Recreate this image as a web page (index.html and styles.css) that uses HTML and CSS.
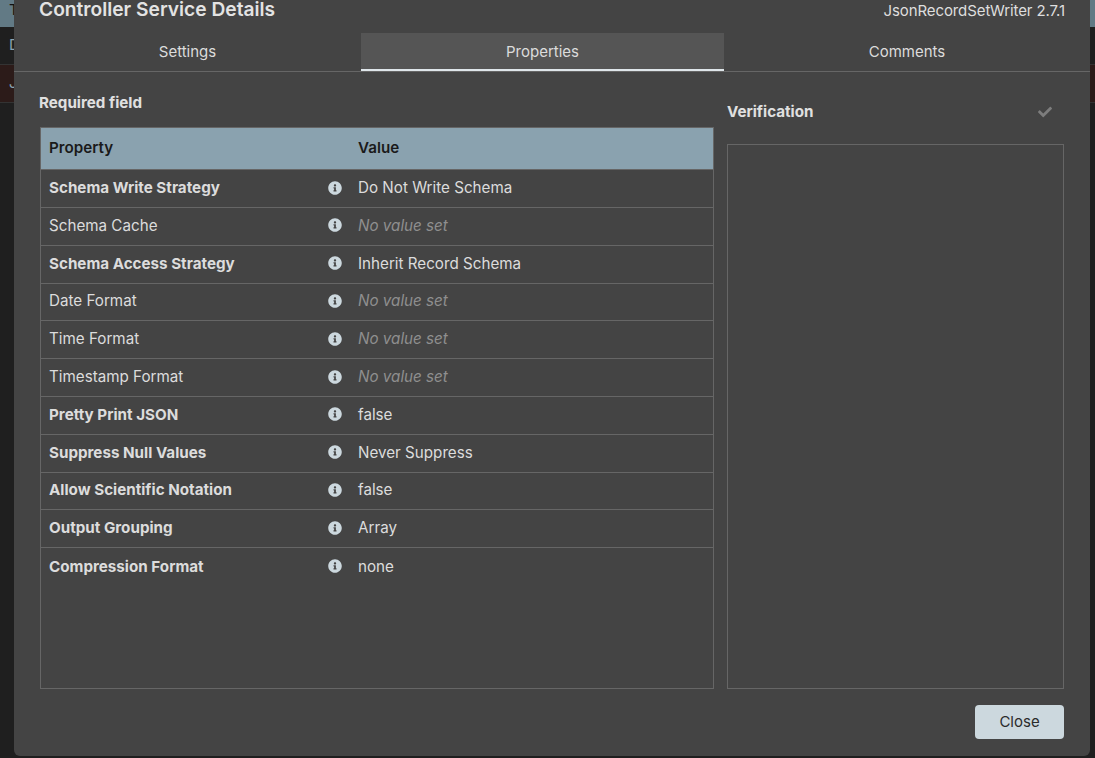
FILE: index.html
```html
<!DOCTYPE html>
<html lang="en">
<head>
<meta charset="utf-8">
<title>Controller Service Details</title>
<link rel="stylesheet" href="styles.css">
</head>
<body>
<div class="backdrop">
  <div class="bg-head">T</div>
  <div class="bg-row">D</div>
  <div class="bg-row bg-error">J</div>
</div>
<main class="dialog">
  <header class="dialog-head">
    <h1>Controller Service Details</h1>
    <span class="version">JsonRecordSetWriter 2.7.1</span>
  </header>
  <nav class="tabs">
    <div class="tab tab-settings">Settings</div>
    <div class="tab tab-props active">Properties</div>
    <div class="tab tab-comments">Comments</div>
  </nav>
  <section class="body">
    <div class="left">
      <div class="req">Required field</div>
      <div class="table">
        <div class="row thead"><div class="name">Property</div><div class="val">Value</div></div>
        <div class="row"><div class="name req-name">Schema Write Strategy</div><svg class="info" viewBox="0 0 512 512"><use href="#i"/></svg><div class="val">Do Not Write Schema</div></div>
        <div class="row"><div class="name">Schema Cache</div><svg class="info" viewBox="0 0 512 512"><use href="#i"/></svg><div class="val none">No value set</div></div>
        <div class="row"><div class="name req-name">Schema Access Strategy</div><svg class="info" viewBox="0 0 512 512"><use href="#i"/></svg><div class="val">Inherit Record Schema</div></div>
        <div class="row"><div class="name">Date Format</div><svg class="info" viewBox="0 0 512 512"><use href="#i"/></svg><div class="val none">No value set</div></div>
        <div class="row"><div class="name">Time Format</div><svg class="info" viewBox="0 0 512 512"><use href="#i"/></svg><div class="val none">No value set</div></div>
        <div class="row"><div class="name">Timestamp Format</div><svg class="info" viewBox="0 0 512 512"><use href="#i"/></svg><div class="val none">No value set</div></div>
        <div class="row"><div class="name req-name">Pretty Print JSON</div><svg class="info" viewBox="0 0 512 512"><use href="#i"/></svg><div class="val">false</div></div>
        <div class="row"><div class="name req-name">Suppress Null Values</div><svg class="info" viewBox="0 0 512 512"><use href="#i"/></svg><div class="val">Never Suppress</div></div>
        <div class="row"><div class="name req-name">Allow Scientific Notation</div><svg class="info" viewBox="0 0 512 512"><use href="#i"/></svg><div class="val">false</div></div>
        <div class="row"><div class="name req-name">Output Grouping</div><svg class="info" viewBox="0 0 512 512"><use href="#i"/></svg><div class="val">Array</div></div>
        <div class="row last"><div class="name req-name">Compression Format</div><svg class="info" viewBox="0 0 512 512"><use href="#i"/></svg><div class="val">none</div></div>
      </div>
    </div>
    <aside class="right">
      <div class="verify-head">
        <span class="verify-title">Verification</span>
        <svg class="check" viewBox="0 0 512 512"><path d="M173.9 439.4l-166.4-166.4c-10-10-10-26.2 0-36.2l36.2-36.2c10-10 26.2-10 36.2 0L192 312.7 432.1 72.6c10-10 26.2-10 36.2 0l36.2 36.2c10 10 10 26.2 0 36.2l-294.4 294.4c-10 10-26.2 10-36.2 0z"/></svg>
      </div>
      <div class="verify-box"></div>
    </aside>
  </section>
  <footer class="foot"><button class="close" type="button">Close</button></footer>
</main>
<svg class="defs" width="0" height="0"><defs><path id="i" d="M256 8C119 8 8 119 8 256s111 248 248 248 248-111 248-248S393 8 256 8zm0 110c23.200 0 42 18.800 42 42s-18.800 42-42 42-42-18.800-42-42 18.800-42 42-42zm56 254c0 6.600-5.400 12-12 12h-88c-6.600 0-12-5.400-12-12v-24c0-6.600 5.400-12 12-12h12v-64h-12c-6.600 0-12-5.400-12-12v-24c0-6.600 5.400-12 12-12h64c6.600 0 12 5.400 12 12v100h12c6.600 0 12 5.400 12 12v24z"/></defs></svg>
</body>
</html>
```
FILE: styles.css
```css
* { box-sizing: border-box; }
html, body { margin: 0; height: 100%; overflow: hidden; }
body {
  position: relative;
  width: 1095px;
  height: 758px;
  background: #1f1f1f;
  font-family: Inter, "Liberation Sans", sans-serif;
  color: #dcdcdc;
  padding: 0 5px 2px 14px;
}
.backdrop { position: absolute; inset: 0; font-size: 15px; color: #8aa2af; }
.bg-head { height: 27px; background: #627a85; color: #111; padding-left: 9px; }
.bg-row { height: 38px; line-height: 36px; background: #1f1f1f; padding-left: 9px; border-bottom: 1px solid #333; }
.bg-error { background: #2c1b19; }
.dialog {
  position: relative;
  height: 756px;
  background: #444;
  border-radius: 0 0 6px 6px;
  display: flex;
  flex-direction: column;
}
.dialog-head {
  height: 33px;
  display: flex;
  justify-content: space-between;
  align-items: flex-start;
  padding: 0 25px 0 25px;
}
.dialog-head h1 {
  margin: -3px 0 0;
  font-size: 19.2px;
  line-height: 24px;
  font-weight: 600;
  color: #e3e3e3;
}
.version { font-size: 15px; line-height: 22px; color: #dedede; letter-spacing: -0.1px; }
.tabs {
  display: flex;
  height: 39px;
  border-bottom: 1px solid #666;
}
.tab {
  display: flex;
  align-items: center;
  justify-content: center;
  font-size: 15px;
  color: #dcdcdc;
  height: 38px;
  border-bottom: 2px solid transparent;
}
.tab-settings { width: 347px; }
.tab-props { width: 363px; }
.tab-comments { flex: 1; }
.tab.active { background: #555; border-bottom-color: #dfe6ea; }
.body {
  flex: 1;
  min-height: 0;
  display: flex;
  padding: 0 26px 0 26px;
}
.left { width: 674px; display: flex; flex-direction: column; }
.req {
  font-size: 15.2px;
  font-weight: 700;
  line-height: 20px;
  margin-top: 21px;
  margin-bottom: 14px;
  margin-left: -1px;
  color: #e0e0e0;
}
.table {
  height: 562px;
  border: 1px solid #666;
}
.row {
  display: flex;
  align-items: center;
  height: 37.8px;
  padding-bottom: 2px;
  border-bottom: 1px solid #666;
  font-size: 15.2px;
  color: #dcdcdc;
}
.row.last { border-bottom: 0; }
.thead {
  height: 42.2px;
  padding-bottom: 3px;
  background: #8aa2af;
  color: #1a1a1a;
  font-weight: 600;
}
.name { padding-left: 8px; width: 287px; }
.thead .name { width: 317px; }
.req-name { font-weight: 700; }
.info { width: 14px; height: 14px; fill: #ccd8de; margin-right: 16px; flex: none; }
.none { font-style: italic; color: #8f8f8f; }
.right { margin-left: 13px; flex: 1; display: flex; flex-direction: column; }
.verify-head {
  display: flex;
  align-items: center;
  justify-content: space-between;
  height: 20px;
  margin-top: 30px;
  margin-bottom: 22px;
}
.verify-title { font-size: 15.2px; font-weight: 700; color: #e0e0e0; margin-top: -2px; }
.check { width: 14px; height: 14px; fill: #7d7d7d; margin-right: 12px; }
.verify-box { height: 545px; border: 1px solid #666; }
.foot {
  display: flex;
  justify-content: flex-end;
  padding: 0 26px 17px 0;
}
.close {
  width: 89px;
  height: 34px;
  padding-bottom: 2px;
  background: #ccd8de;
  color: #2b2b2b;
  border: 0;
  border-radius: 4px;
  font-family: inherit;
  font-size: 15px;
}
.defs { position: absolute; }
```
